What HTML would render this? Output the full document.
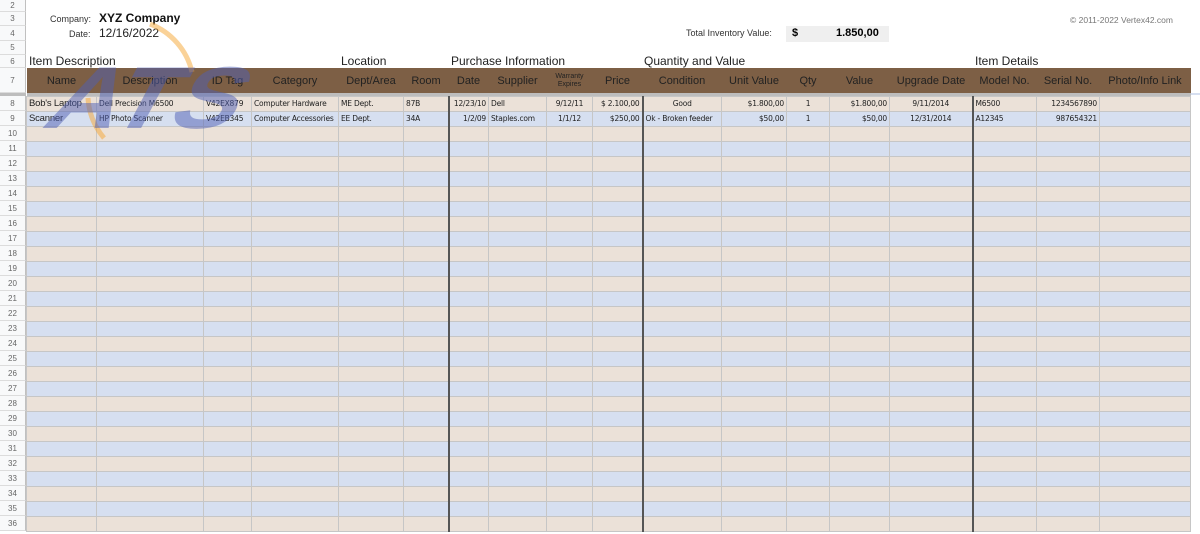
<!DOCTYPE html>
<html><head><meta charset="utf-8"><style>
*{margin:0;padding:0;box-sizing:border-box}
body{width:1200px;height:534px;overflow:hidden;background:#fff;font-family:"Liberation Sans",sans-serif;position:relative}
.rn{position:absolute;left:0;width:26px;background:#f8f9fa;border-right:1px solid #c0c0c0;border-bottom:1px solid #dcdcdc;color:#666;font-size:8px;text-align:center;display:flex;align-items:center;justify-content:center}
.abs{position:absolute;white-space:nowrap}
table{position:absolute;left:26px;top:68px;border-collapse:collapse;table-layout:fixed;width:1164px}
td{border:1px solid #c6c6c6;height:15px;font-size:7.5px;color:#222;padding:0 2px;white-space:nowrap;overflow:hidden;font-family:"DejaVu Sans","Liberation Sans",sans-serif;letter-spacing:-0.2px}
tr.h td{height:25px;background:#7d5f45;border:none;color:#222;font-family:"Liberation Sans",sans-serif;font-size:11px;text-align:center;letter-spacing:0}
tr.g td{height:3px;background:#bdbdbd;border:none;padding:0}
tr.a td{background:#ebe1d8}
tr.b td{background:#d6dff0}
td.r{text-align:right}td.c{text-align:center}
.tk{border-left:2px solid #555}
</style></head><body>
<div class="rn" style="top:0;height:12px">2</div>
<div class="rn" style="top:12px;height:14px">3</div>
<div class="rn" style="top:26px;height:15px">4</div>
<div class="rn" style="top:41px;height:14px">5</div>
<div class="rn" style="top:55px;height:13px">6</div>
<div class="rn" style="top:68px;height:25px">7</div>
<div class="rn" style="top:93px;height:3px;background:#bdbdbd;border:none"></div>
<div class="abs" style="left:50px;top:14px;font-size:9px;color:#333">Company:</div>
<div class="abs" style="left:99px;top:11px;font-size:12px;font-weight:bold;color:#111">XYZ Company</div>
<div class="abs" style="left:69px;top:29px;font-size:9px;color:#333">Date:</div>
<div class="abs" style="left:99px;top:26px;font-size:12px;color:#222">12/16/2022</div>
<div class="abs" style="left:686px;top:28px;font-size:9px;color:#333">Total Inventory Value:</div>
<div class="abs" style="left:786px;top:26px;width:103px;height:16px;background:#efefef"></div>
<div class="abs" style="left:792px;top:27px;font-size:11px;font-weight:bold">$</div>
<div class="abs" style="left:836px;top:27px;font-size:11px;font-weight:bold">1.850,00</div>
<div class="abs" style="left:1070px;top:15px;font-size:8.5px;color:#777">© 2011-2022 Vertex42.com</div>
<div class="abs" style="left:29px;top:54px;font-size:12px;color:#222">Item Description</div>
<div class="abs" style="left:341px;top:54px;font-size:12px;color:#222">Location</div>
<div class="abs" style="left:451px;top:54px;font-size:12px;color:#222">Purchase Information</div>
<div class="abs" style="left:644px;top:54px;font-size:12px;color:#222">Quantity and Value</div>
<div class="abs" style="left:975px;top:54px;font-size:12px;color:#222">Item Details</div>
<div class="abs" style="left:1190px;top:93px;width:10px;height:2px;background:#d6dff0"></div>
<table>
<colgroup><col style="width:70px"><col style="width:107px"><col style="width:48px"><col style="width:87px"><col style="width:65px"><col style="width:45px"><col style="width:40px"><col style="width:58px"><col style="width:46px"><col style="width:50px"><col style="width:79px"><col style="width:65px"><col style="width:43px"><col style="width:60px"><col style="width:83px"><col style="width:64px"><col style="width:63px"><col style="width:91px"></colgroup>
<tr class="h"><td>Name</td><td>Description</td><td>ID Tag</td><td>Category</td><td>Dept/Area</td><td>Room</td><td>Date</td><td>Supplier</td><td style="font-size:7px;line-height:8px">Warranty<br>Expires</td><td>Price</td><td>Condition</td><td>Unit Value</td><td>Qty</td><td>Value</td><td>Upgrade Date</td><td>Model No.</td><td>Serial No.</td><td>Photo/Info Link</td></tr>
<tr class="g"><td colspan="18"></td></tr>
<tr class="a"><td style="font-size:9.5px;font-family:'Liberation Sans',sans-serif">Bob's Laptop</td><td>Dell Precision M6500</td><td>V42EX879</td><td>Computer Hardware</td><td>ME Dept.</td><td>87B</td><td class="r tk">12/23/10</td><td>Dell</td><td class="c">9/12/11</td><td class="r">$ 2.100,00</td><td class="c tk">Good</td><td class="r">$1.800,00</td><td class="c">1</td><td class="r">$1.800,00</td><td class="c">9/11/2014</td><td class="tk">M6500</td><td class="r">1234567890</td><td></td></tr>
<tr class="b"><td style="font-size:9.5px;font-family:'Liberation Sans',sans-serif">Scanner</td><td>HP Photo Scanner</td><td>V42EB345</td><td>Computer Accessories</td><td>EE Dept.</td><td>34A</td><td class="r tk">1/2/09</td><td>Staples.com</td><td class="c">1/1/12</td><td class="r">$250,00</td><td class="tk">Ok - Broken feeder</td><td class="r">$50,00</td><td class="c">1</td><td class="r">$50,00</td><td class="c">12/31/2014</td><td class="tk">A12345</td><td class="r">987654321</td><td></td></tr>
<tr class="a"><td></td><td></td><td></td><td></td><td></td><td></td><td class="tk"></td><td></td><td></td><td></td><td class="tk"></td><td></td><td></td><td></td><td></td><td class="tk"></td><td></td><td></td></tr>
<tr class="b"><td></td><td></td><td></td><td></td><td></td><td></td><td class="tk"></td><td></td><td></td><td></td><td class="tk"></td><td></td><td></td><td></td><td></td><td class="tk"></td><td></td><td></td></tr>
<tr class="a"><td></td><td></td><td></td><td></td><td></td><td></td><td class="tk"></td><td></td><td></td><td></td><td class="tk"></td><td></td><td></td><td></td><td></td><td class="tk"></td><td></td><td></td></tr>
<tr class="b"><td></td><td></td><td></td><td></td><td></td><td></td><td class="tk"></td><td></td><td></td><td></td><td class="tk"></td><td></td><td></td><td></td><td></td><td class="tk"></td><td></td><td></td></tr>
<tr class="a"><td></td><td></td><td></td><td></td><td></td><td></td><td class="tk"></td><td></td><td></td><td></td><td class="tk"></td><td></td><td></td><td></td><td></td><td class="tk"></td><td></td><td></td></tr>
<tr class="b"><td></td><td></td><td></td><td></td><td></td><td></td><td class="tk"></td><td></td><td></td><td></td><td class="tk"></td><td></td><td></td><td></td><td></td><td class="tk"></td><td></td><td></td></tr>
<tr class="a"><td></td><td></td><td></td><td></td><td></td><td></td><td class="tk"></td><td></td><td></td><td></td><td class="tk"></td><td></td><td></td><td></td><td></td><td class="tk"></td><td></td><td></td></tr>
<tr class="b"><td></td><td></td><td></td><td></td><td></td><td></td><td class="tk"></td><td></td><td></td><td></td><td class="tk"></td><td></td><td></td><td></td><td></td><td class="tk"></td><td></td><td></td></tr>
<tr class="a"><td></td><td></td><td></td><td></td><td></td><td></td><td class="tk"></td><td></td><td></td><td></td><td class="tk"></td><td></td><td></td><td></td><td></td><td class="tk"></td><td></td><td></td></tr>
<tr class="b"><td></td><td></td><td></td><td></td><td></td><td></td><td class="tk"></td><td></td><td></td><td></td><td class="tk"></td><td></td><td></td><td></td><td></td><td class="tk"></td><td></td><td></td></tr>
<tr class="a"><td></td><td></td><td></td><td></td><td></td><td></td><td class="tk"></td><td></td><td></td><td></td><td class="tk"></td><td></td><td></td><td></td><td></td><td class="tk"></td><td></td><td></td></tr>
<tr class="b"><td></td><td></td><td></td><td></td><td></td><td></td><td class="tk"></td><td></td><td></td><td></td><td class="tk"></td><td></td><td></td><td></td><td></td><td class="tk"></td><td></td><td></td></tr>
<tr class="a"><td></td><td></td><td></td><td></td><td></td><td></td><td class="tk"></td><td></td><td></td><td></td><td class="tk"></td><td></td><td></td><td></td><td></td><td class="tk"></td><td></td><td></td></tr>
<tr class="b"><td></td><td></td><td></td><td></td><td></td><td></td><td class="tk"></td><td></td><td></td><td></td><td class="tk"></td><td></td><td></td><td></td><td></td><td class="tk"></td><td></td><td></td></tr>
<tr class="a"><td></td><td></td><td></td><td></td><td></td><td></td><td class="tk"></td><td></td><td></td><td></td><td class="tk"></td><td></td><td></td><td></td><td></td><td class="tk"></td><td></td><td></td></tr>
<tr class="b"><td></td><td></td><td></td><td></td><td></td><td></td><td class="tk"></td><td></td><td></td><td></td><td class="tk"></td><td></td><td></td><td></td><td></td><td class="tk"></td><td></td><td></td></tr>
<tr class="a"><td></td><td></td><td></td><td></td><td></td><td></td><td class="tk"></td><td></td><td></td><td></td><td class="tk"></td><td></td><td></td><td></td><td></td><td class="tk"></td><td></td><td></td></tr>
<tr class="b"><td></td><td></td><td></td><td></td><td></td><td></td><td class="tk"></td><td></td><td></td><td></td><td class="tk"></td><td></td><td></td><td></td><td></td><td class="tk"></td><td></td><td></td></tr>
<tr class="a"><td></td><td></td><td></td><td></td><td></td><td></td><td class="tk"></td><td></td><td></td><td></td><td class="tk"></td><td></td><td></td><td></td><td></td><td class="tk"></td><td></td><td></td></tr>
<tr class="b"><td></td><td></td><td></td><td></td><td></td><td></td><td class="tk"></td><td></td><td></td><td></td><td class="tk"></td><td></td><td></td><td></td><td></td><td class="tk"></td><td></td><td></td></tr>
<tr class="a"><td></td><td></td><td></td><td></td><td></td><td></td><td class="tk"></td><td></td><td></td><td></td><td class="tk"></td><td></td><td></td><td></td><td></td><td class="tk"></td><td></td><td></td></tr>
<tr class="b"><td></td><td></td><td></td><td></td><td></td><td></td><td class="tk"></td><td></td><td></td><td></td><td class="tk"></td><td></td><td></td><td></td><td></td><td class="tk"></td><td></td><td></td></tr>
<tr class="a"><td></td><td></td><td></td><td></td><td></td><td></td><td class="tk"></td><td></td><td></td><td></td><td class="tk"></td><td></td><td></td><td></td><td></td><td class="tk"></td><td></td><td></td></tr>
<tr class="b"><td></td><td></td><td></td><td></td><td></td><td></td><td class="tk"></td><td></td><td></td><td></td><td class="tk"></td><td></td><td></td><td></td><td></td><td class="tk"></td><td></td><td></td></tr>
<tr class="a"><td></td><td></td><td></td><td></td><td></td><td></td><td class="tk"></td><td></td><td></td><td></td><td class="tk"></td><td></td><td></td><td></td><td></td><td class="tk"></td><td></td><td></td></tr>
<tr class="b"><td></td><td></td><td></td><td></td><td></td><td></td><td class="tk"></td><td></td><td></td><td></td><td class="tk"></td><td></td><td></td><td></td><td></td><td class="tk"></td><td></td><td></td></tr>
<tr class="a"><td></td><td></td><td></td><td></td><td></td><td></td><td class="tk"></td><td></td><td></td><td></td><td class="tk"></td><td></td><td></td><td></td><td></td><td class="tk"></td><td></td><td></td></tr>
</table>
<div class="rn" style="top:96px;height:15px">8</div><div class="rn" style="top:111px;height:15px">9</div><div class="rn" style="top:126px;height:15px">10</div><div class="rn" style="top:141px;height:15px">11</div><div class="rn" style="top:156px;height:15px">12</div><div class="rn" style="top:171px;height:15px">13</div><div class="rn" style="top:186px;height:15px">14</div><div class="rn" style="top:201px;height:15px">15</div><div class="rn" style="top:216px;height:15px">16</div><div class="rn" style="top:231px;height:15px">17</div><div class="rn" style="top:246px;height:15px">18</div><div class="rn" style="top:261px;height:15px">19</div><div class="rn" style="top:276px;height:15px">20</div><div class="rn" style="top:291px;height:15px">21</div><div class="rn" style="top:306px;height:15px">22</div><div class="rn" style="top:321px;height:15px">23</div><div class="rn" style="top:336px;height:15px">24</div><div class="rn" style="top:351px;height:15px">25</div><div class="rn" style="top:366px;height:15px">26</div><div class="rn" style="top:381px;height:15px">27</div><div class="rn" style="top:396px;height:15px">28</div><div class="rn" style="top:411px;height:15px">29</div><div class="rn" style="top:426px;height:15px">30</div><div class="rn" style="top:441px;height:15px">31</div><div class="rn" style="top:456px;height:15px">32</div><div class="rn" style="top:471px;height:15px">33</div><div class="rn" style="top:486px;height:15px">34</div><div class="rn" style="top:501px;height:15px">35</div><div class="rn" style="top:516px;height:15px">36</div>
<svg style="position:absolute;left:0;top:0" width="300" height="160">
<path d="M150 24 A68 68 0 0 1 192 72" fill="none" stroke="rgba(245,165,50,0.5)" stroke-width="5"/>
<path d="M88 98 A68 68 0 0 0 104 138" fill="none" stroke="rgba(245,165,50,0.5)" stroke-width="5"/>
<g transform="translate(40,128) skewX(-28)">
<text x="0" y="0" font-family="Liberation Sans" font-weight="bold" font-size="88" fill="rgba(80,95,180,0.5)" textLength="190" lengthAdjust="spacingAndGlyphs">ATS</text>
</g>
</svg>
</body></html>
